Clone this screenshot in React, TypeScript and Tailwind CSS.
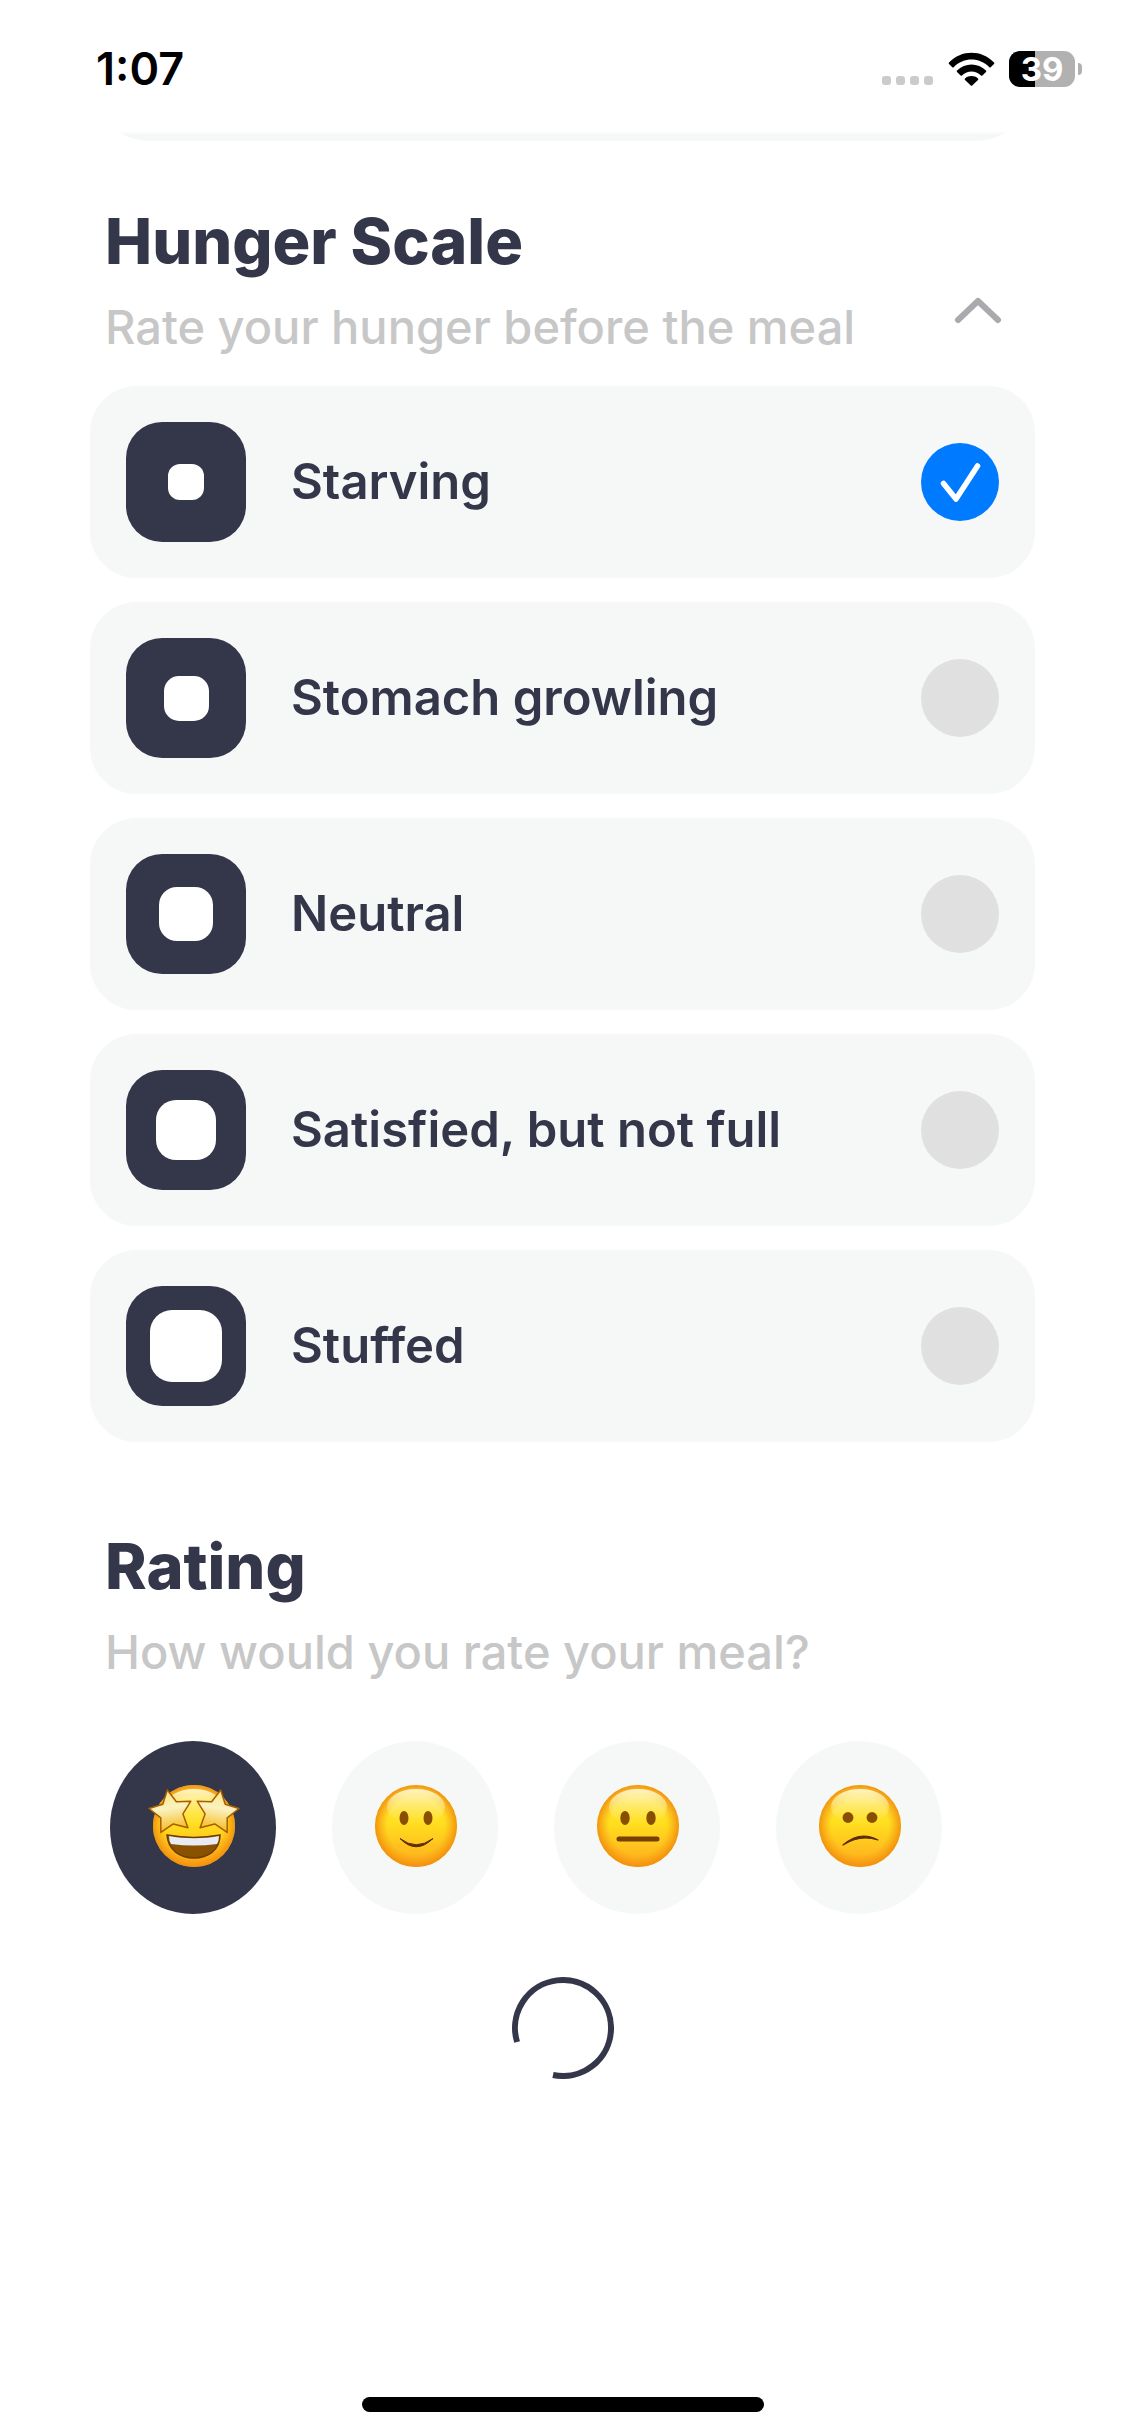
import { useState } from "react"

const hungerLevels = [
    { id: "starving", label: "Starving", inner: "size-9 rounded-[12px]" },
    { id: "growling", label: "Stomach growling", inner: "size-[45px] rounded-[15px]" },
    { id: "neutral", label: "Neutral", inner: "size-[54px] rounded-[18px]" },
    { id: "satisfied", label: "Satisfied, but not full", inner: "size-[60px] rounded-[20px]" },
    { id: "stuffed", label: "Stuffed", inner: "size-[72px] rounded-[22px]" },
]

const ratings = ["Amazing", "Good", "Okay", "Bad"]

const StatusBar = () => {
    return (
        <div className="flex h-[131px] items-start justify-between pt-[51px] pr-[43px] pl-24">
            <span className="text-[45px] leading-9 font-semibold text-black">1:07</span>
            <div className="flex h-9 items-center">
                <div className="mr-[15px] flex gap-[5px] self-end pb-0.5">
                    <span className="size-[9px] rounded-[3px] bg-[#cbcbcb]" />
                    <span className="size-[9px] rounded-[3px] bg-[#cbcbcb]" />
                    <span className="size-[9px] rounded-[3px] bg-[#cbcbcb]" />
                    <span className="size-[9px] rounded-[3px] bg-[#cbcbcb]" />
                </div>
                <svg className="mr-[14px] h-[34px] w-[47px]" viewBox="0 0 47 34" aria-hidden="true">
                    <path d="M1 10.6C13.5-2.4 33.5-2.4 46 10.6Q46.6 11.3 46 12L42.7 15.2Q42 15.8 41.3 15.2C31.3 5 15.7 5 5.7 15.2Q5 15.8 4.3 15.2L1 12Q.4 11.3 1 10.6Z" />
                    <path d="M9 18.6C17 10.5 30 10.5 38 18.6Q38.6 19.3 38 20L34.4 23.4Q33.7 24 33 23.4C27.5 18.3 19.5 18.3 14 23.4Q13.3 24 12.6 23.4L9 20Q8.4 19.3 9 18.6Z" />
                    <path d="M17 26.5C20.7 23.3 26.3 23.3 30 26.5Q30.7 27.2 30 28L24.2 33.4Q23.5 34 22.8 33.4L17 28Q16.3 27.2 17 26.5Z" />
                </svg>
                <div className="flex items-center gap-[3px]">
                    <div className="flex h-9 w-[66px] items-center justify-center rounded-[11px] bg-linear-to-r from-black from-40% to-[#b1b1b1] to-40%">
                        <span className="text-[33px] leading-9 font-bold text-white">39</span>
                    </div>
                    <span className="h-3 w-1 rounded-r-full bg-[#b1b1b1]" />
                </div>
            </div>
        </div>
    )
}

const SectionTitle = ({ title, subtitle }: { title: string, subtitle: string }) => {
    return (
        <div className="flex flex-col gap-5">
            <h2 className="text-[63px] leading-[72px] font-extrabold">{title}</h2>
            <p className="text-[47px] leading-[60px] font-medium text-[#c7c7c7]">{subtitle}</p>
        </div>
    )
}

const HungerOption = ({ level, checked, onSelect }: {
    level: { id: string, label: string, inner: string },
    checked: boolean,
    onSelect: () => void
}) => {
    return (
        <label className="flex cursor-pointer items-center rounded-[46px] bg-[#f6f8f8] p-9">
            <span className="flex size-[120px] shrink-0 items-center justify-center rounded-[36px] bg-[#34364a]">
                <span className={`bg-white ${level.inner}`} />
            </span>
            <span className="ml-[45px] grow text-[49px] leading-[60px] font-semibold">{level.label}</span>
            <span className="relative size-[78px] shrink-0">
                <input
                    type="radio"
                    name="hunger"
                    value={level.id}
                    checked={checked}
                    onChange={onSelect}
                    className="block size-full appearance-none rounded-full bg-[#e0e0e0] checked:bg-[#007aff]"
                />
                {checked && (
                    <svg className="pointer-events-none absolute inset-0" viewBox="0 0 78 78" fill="none" stroke="white" strokeWidth="5.5" strokeLinecap="round" strokeLinejoin="round" aria-hidden="true">
                        <path d="M22.5 40.5L35 56L56.5 23" />
                    </svg>
                )}
            </span>
        </label>
    )
}

const star = "M0-17L5.500-6.500L17-5L9 4L11 15.500L0 10.500L-11 15.500L-9 4L-17-5L-5.500-6.500Z"

const Face = ({ name }: { name: string }) => {
    return (
        <svg className="size-[96px]" viewBox="-49 -46 96 96" aria-hidden="true">
            <circle r="41" fill="url(#face)" />
            <circle r="41" fill="url(#rim)" />
            <ellipse cy="-19" rx="29" ry="18" fill="url(#shine)" />
            {name === "Amazing" && (
                <>
                    <path d="M-27 9C-10 12 10 12 26 9C26 24 14 32 0 32S-26 24-27 9Z" fill="#8a5200" stroke="#6d3d00" strokeWidth="1.5" />
                    <path d="M-25 10C-10 13 10 13 25 10Q25 15 23 18Q0 21-23 18Q-25 15-25 10Z" fill="#e9ebf2" />
                    <g fill="url(#star)" stroke="#a85e00" strokeWidth="1.2" strokeLinejoin="round">
                        <path transform="translate(-23 -15) rotate(-10) scale(1.25)" d={star} />
                        <path transform="translate(23 -15) rotate(10) scale(1.25)" d={star} />
                    </g>
                </>
            )}
            {name === "Good" && (
                <>
                    <ellipse cx="-12" cy="-8" rx="4.5" ry="7" fill="#884f00" />
                    <ellipse cx="12" cy="-8" rx="4.5" ry="7" fill="#884f00" />
                    <path d="M-16 12.5Q0 25 17 12.5Q0 29-16 12.5Z" fill="#5b2d00" stroke="#5b2d00" strokeLinejoin="round" />
                </>
            )}
            {name === "Okay" && (
                <>
                    <ellipse cx="-13" cy="-8" rx="4.7" ry="7" fill="#884f00" />
                    <ellipse cx="13" cy="-8" rx="4.7" ry="7" fill="#884f00" />
                    <path d="M-19 13H19" stroke="#784000" strokeWidth="5" strokeLinecap="round" />
                </>
            )}
            {name === "Bad" && (
                <>
                    <circle cx="-12" cy="-8.5" r="5.4" fill="#884f00" />
                    <circle cx="12" cy="-8.5" r="5.4" fill="#884f00" />
                    <path d="M-17 19Q0 4 18 14Q0 8-17 19Z" fill="#5b2d00" stroke="#5b2d00" strokeWidth="1.2" strokeLinejoin="round" />
                </>
            )}
        </svg>
    )
}

// shared gradients for the rating faces
const FaceGradients = () => {
    return (
        <svg className="absolute size-0" aria-hidden="true">
            <defs>
                <linearGradient id="face" x1="0" y1="0" x2="0" y2="1">
                    <stop offset="0" stopColor="#ffdf4a" />
                    <stop offset=".45" stopColor="#ffe01f" />
                    <stop offset="1" stopColor="#ffaa1d" />
                </linearGradient>
                <radialGradient id="rim">
                    <stop offset=".7" stopColor="#f79a10" stopOpacity="0" />
                    <stop offset="1" stopColor="#f08c0c" stopOpacity=".9" />
                </radialGradient>
                <linearGradient id="shine" x1="0" y1="0" x2="0" y2="1">
                    <stop offset="0" stopColor="#fffbd5" stopOpacity=".9" />
                    <stop offset="1" stopColor="#fff07a" stopOpacity="0" />
                </linearGradient>
                <linearGradient id="star" x1="0" y1="0" x2="0" y2="1">
                    <stop offset="0" stopColor="#ffe680" />
                    <stop offset=".45" stopColor="#faf2c0" />
                    <stop offset="1" stopColor="#f6bb1c" />
                </linearGradient>
            </defs>
        </svg>
    )
}

const App = () => {
    const [hunger, setHunger] = useState("starving")
    const [rating, setRating] = useState("Amazing")
    const [open, setOpen] = useState(true)

    return (
        <div className="relative flex min-h-screen flex-col bg-white font-['Inter',sans-serif] text-[#34364a]">
            <StatusBar />
            <main className="flex flex-col px-[90px]">
                {/* bottom edge of the card scrolled under the status bar */}
                <div className="flex h-2.5 items-end overflow-hidden">
                    <div className="h-32 w-full shrink-0 rounded-[60px] bg-linear-to-t from-[#f6f8f8] from-5% to-white to-8%" />
                </div>

                <section className="mt-16">
                    <div className="flex items-end justify-between pr-[33px] pl-[15px]">
                        <SectionTitle title="Hunger Scale" subtitle="Rate your hunger before the meal" />
                        <button type="button" aria-label="Toggle hunger scale" aria-expanded={open} onClick={() => setOpen(!open)} className="mb-5 shrink-0 cursor-pointer">
                            <svg className="h-[50px] w-12" viewBox="0 0 48 50" fill="none" stroke="#a9a9ae" strokeWidth="6" strokeLinecap="round" strokeLinejoin="round">
                                <path d="M4 33L24 14L44 33" />
                            </svg>
                        </button>
                    </div>
                    {open && (
                        <div className="mt-[29px] flex flex-col gap-6">
                            {hungerLevels.map((level) => (
                                <HungerOption key={level.id} level={level} checked={hunger === level.id} onSelect={() => setHunger(level.id)} />
                            ))}
                        </div>
                    )}
                </section>

                <section className="mt-[88px] pl-[15px]">
                    <SectionTitle title="Rating" subtitle="How would you rate your meal?" />
                    <FaceGradients />
                    <div className="mt-[59px] flex gap-14 pl-[5px]">
                        {ratings.map((name) => (
                            <label key={name} className="relative flex h-[173px] w-[166px] cursor-pointer items-center justify-center rounded-[50%] bg-[#f6f8f8] has-checked:bg-[#34364a]">
                                <input
                                    type="radio"
                                    name="rating"
                                    value={name}
                                    aria-label={name}
                                    checked={rating === name}
                                    onChange={() => setRating(name)}
                                    className="absolute inset-0 size-full appearance-none rounded-[50%]"
                                />
                                <Face name={name} />
                            </label>
                        ))}
                    </div>
                </section>

                <div role="status" aria-label="Loading" className="mt-[63px] flex justify-center">
                    <svg className="size-[102px]" viewBox="-51 -51 102 102" fill="none" stroke="#34364a" strokeWidth="6">
                        <path d="M-45.9 14A48 48 0 1 1-10 46.95" />
                    </svg>
                </div>
            </main>
            <div className="mt-auto flex justify-center pb-6">
                <div className="h-[15px] w-[402px] rounded-full bg-black" />
            </div>
        </div>
    )
}

export default App
